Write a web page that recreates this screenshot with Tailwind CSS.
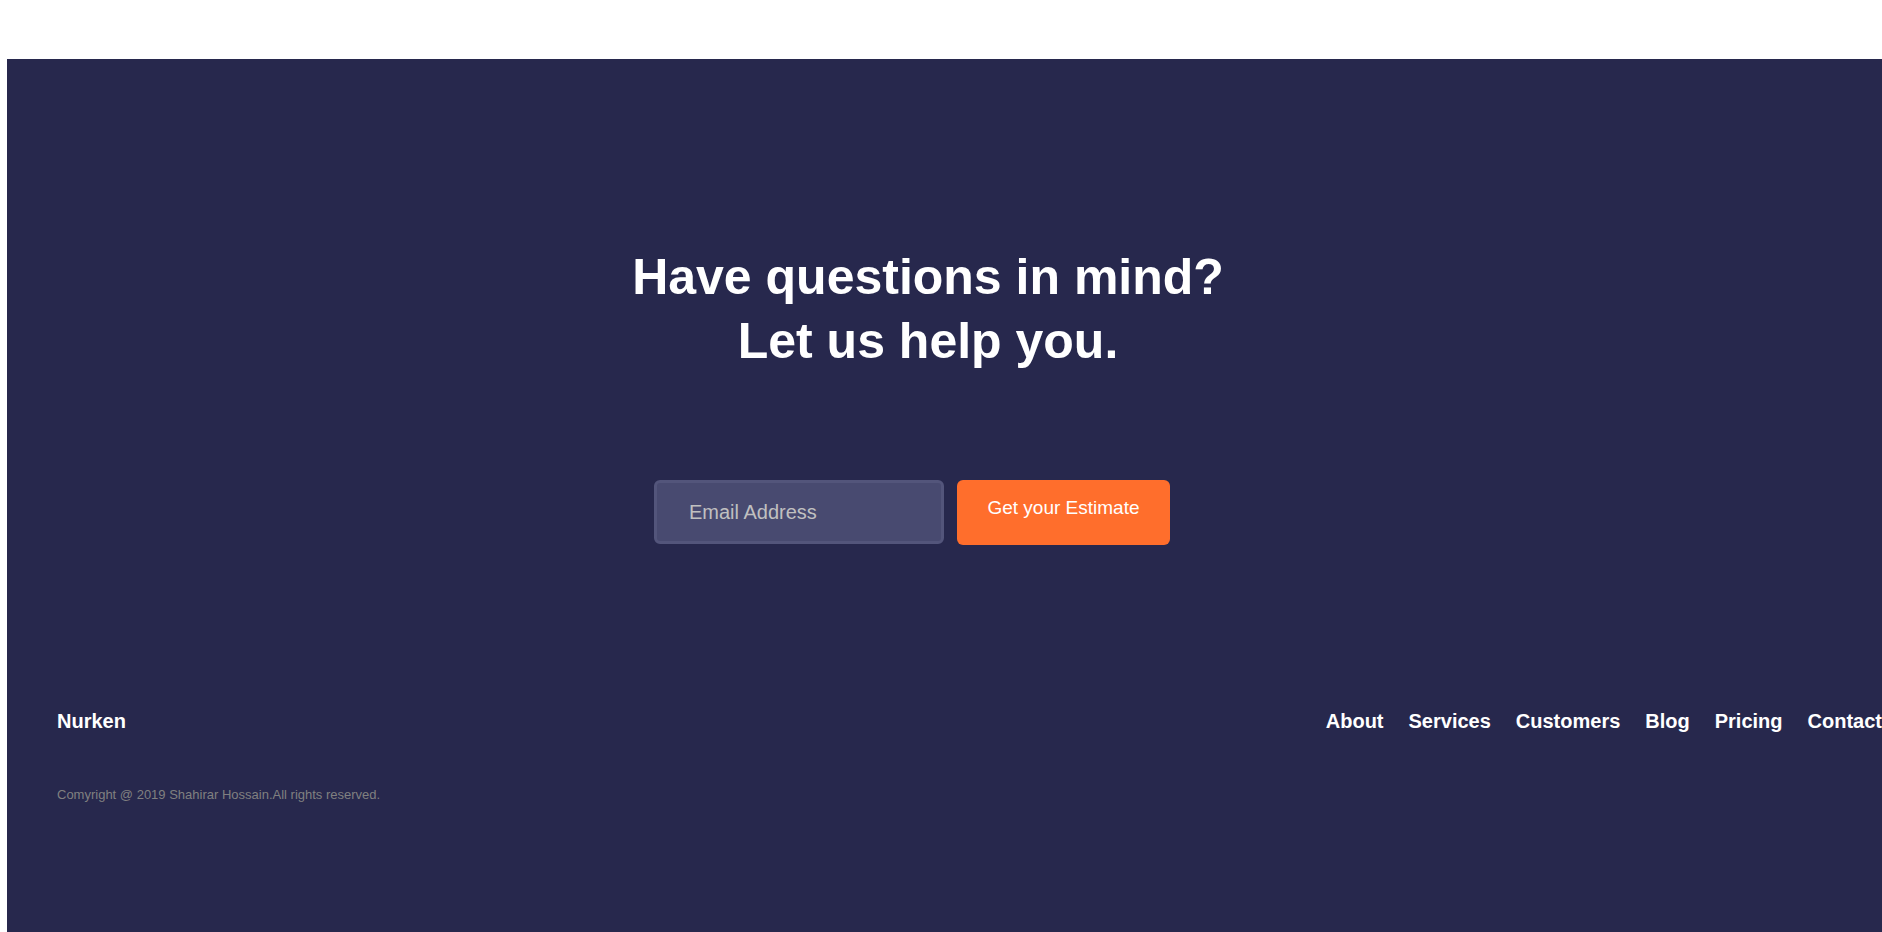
<!DOCTYPE html>
<html lang="en">
<head>
<meta charset="utf-8">
<meta name="viewport" content="width=device-width, initial-scale=1">
<title>Nurken</title>
<script src="https://cdn.jsdelivr.net/npm/@tailwindcss/browser@4"></script>
</head>
<body class="flex min-h-screen flex-col bg-white pt-[59px] pl-[7px] font-['Liberation_Sans',Arial,sans-serif]">
  <div class="flex flex-1 flex-col bg-[#27284d] pt-[186px] pb-24 text-white">
    <main>
      <h1 class="pr-[33px] text-center text-[50px] leading-[64px] font-bold">Have questions in mind?<br>Let us help you.</h1>
      <form class="mt-[107px] flex flex-wrap items-start justify-center gap-[13px] pr-[65px]">
        <input type="email" aria-label="Email Address" placeholder="Email Address" class="h-16 w-[290px] rounded-md border-3 border-[#53557b] bg-[#484a70] px-8 text-xl text-white placeholder:text-[#c0c0c0]">
        <button type="button" class="flex h-[65px] w-[213px] items-start justify-center rounded-md bg-[#ff6e2c] pt-4 text-[19px] leading-6">Get your Estimate</button>
      </form>
    </main>
    <footer class="mt-[164px] pl-[50px]">
      <div class="flex flex-wrap justify-between text-xl leading-6 font-bold">
        <a href="#">Nurken</a>
        <nav class="flex flex-wrap gap-[25px]">
          <a href="#">About</a>
          <a href="#">Services</a>
          <a href="#">Customers</a>
          <a href="#">Blog</a>
          <a href="#">Pricing</a>
          <a href="#">Contact</a>
        </nav>
      </div>
      <p class="mt-[52px] text-[13px] leading-5 text-[#808080]">Comyright @ 2019 Shahirar Hossain.All rights reserved.</p>
    </footer>
  </div>
</body>
</html>
